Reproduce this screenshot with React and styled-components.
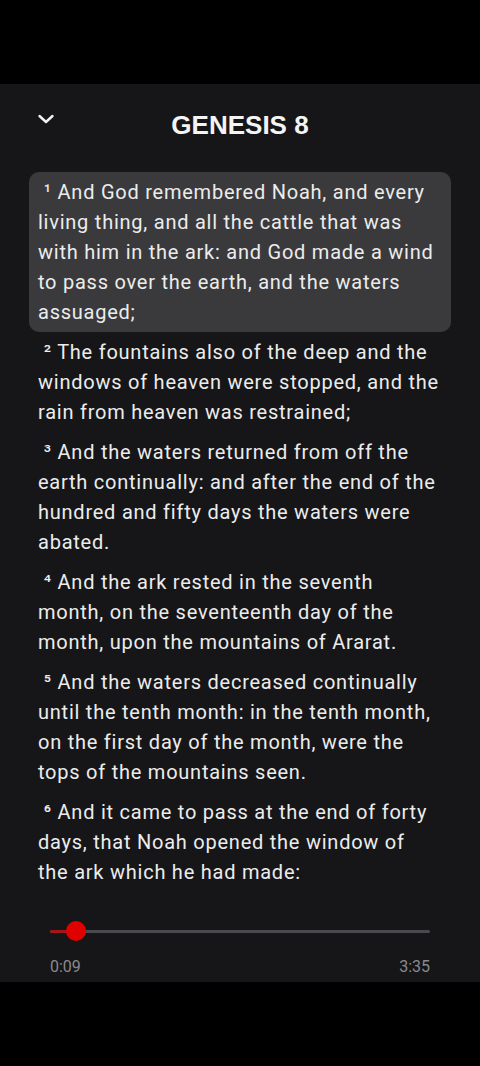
import React from "react";
import styled, { createGlobalStyle } from "styled-components";

const Global = createGlobalStyle`
  html, body { margin: 0; padding: 0; background: #000; }
  body { font-family: Roboto, "Noto Sans", sans-serif; }
`;

const Screen = styled.div`
  width: 480px;
  height: 1066px;
  background: #000;
  display: flex;
  flex-direction: column;
`;

const StatusBar = styled.div`
  height: 84px;
  flex: none;
`;

const Panel = styled.div`
  background: #161618;
  height: 898px;
  flex: none;
  display: flex;
  flex-direction: column;
`;

const Header = styled.div`
  height: 88px;
  display: grid;
  grid-template-columns: 80px 1fr 80px;
  align-items: center;
  flex: none;
`;

const BackButton = styled.button`
  background: none;
  border: none;
  padding: 0;
  margin: 0 0 18px 36px;
  width: 20px;
  height: 20px;
  display: flex;
  align-items: center;
  justify-content: center;
  color: #f2f2f2;
`;

const Title = styled.h1`
  margin: 0 0 6px 0;
  text-align: center;
  font-family: "Liberation Sans", Arial, sans-serif;
  font-weight: 700;
  font-size: 26px;
  color: #f4f4f4;
`;

const Verses = styled.div`
  display: flex;
  flex-direction: column;
  padding: 0 29px;
  flex: 1;
`;

const Verse = styled.p`
  margin: 0;
  padding: 5px 11px 5px 9px;
  border-radius: 10px;
  background: ${(p) => (p.$active ? "#3a3a3d" : "transparent")};
  color: #ececec;
  font-family: Roboto, sans-serif;
  font-size: 20px;
  line-height: 30px;
  letter-spacing: 0.76px;
`;

const Player = styled.div`
  padding: 0 50px;
  height: 90px;
  display: flex;
  flex-direction: column;
  flex: none;
`;

const Track = styled.div`
  position: relative;
  height: 20px;
  margin-top: 29px;
  display: flex;
  align-items: center;
`;

const Rail = styled.div`
  height: 3px;
  width: 100%;
  background: #4a4a4e;
  border-radius: 2px;
`;

const Filled = styled.div`
  position: absolute;
  left: 0;
  top: 9px;
  height: 3px;
  background: #a0161a;
  border-radius: 2px;
`;

const Thumb = styled.div`
  position: absolute;
  top: 0;
  width: 20px;
  height: 20px;
  margin-left: -10px;
  border-radius: 50%;
  background: #e00000;
`;

const Times = styled.div`
  display: flex;
  justify-content: space-between;
  margin-top: 16px;
  font-family: Roboto, sans-serif;
  font-size: 16px;
  color: #8a8a8c;
`;

const verses = [
  "And God remembered Noah, and every living thing, and all the cattle that was with him in the ark: and God made a wind to pass over the earth, and the waters assuaged;",
  "The fountains also of the deep and the windows of heaven were stopped, and the rain from heaven was restrained;",
  "And the waters returned from off the earth continually: and after the end of the hundred and fifty days the waters were abated.",
  "And the ark rested in the seventh month, on the seventeenth day of the month, upon the mountains of Ararat.",
  "And the waters decreased continually until the tenth month: in the tenth month, on the first day of the month, were the tops of the mountains seen.",
  "And it came to pass at the end of forty days, that Noah opened the window of the ark which he had made:",
];

const sup = ["¹", "²", "³", "⁴", "⁵", "⁶"];

export default function App() {
  const progress = 26 / 380;
  return (
    <Screen>
      <Global />
      <StatusBar />
      <Panel>
        <Header>
          <BackButton aria-label="Close">
            <svg width="18" height="12" viewBox="0 0 18 12" fill="none">
              <path d="M2.5 3 L9 9 L15.5 3" stroke="currentColor" strokeWidth="2.4" strokeLinecap="round" strokeLinejoin="round" />
            </svg>
          </BackButton>
          <Title>GENESIS 8</Title>
          <div />
        </Header>
        <Verses>
          {verses.map((v, i) => (
            <Verse key={i} $active={i === 0}>
              {"\u00a0" + sup[i] + " " + v}
            </Verse>
          ))}
        </Verses>
        <Player>
          <Track>
            <Rail />
            <Filled style={{ width: `${progress * 100}%` }} />
            <Thumb style={{ left: `${progress * 100}%` }} />
          </Track>
          <Times>
            <span>0:09</span>
            <span>3:35</span>
          </Times>
        </Player>
      </Panel>
    </Screen>
  );
}
